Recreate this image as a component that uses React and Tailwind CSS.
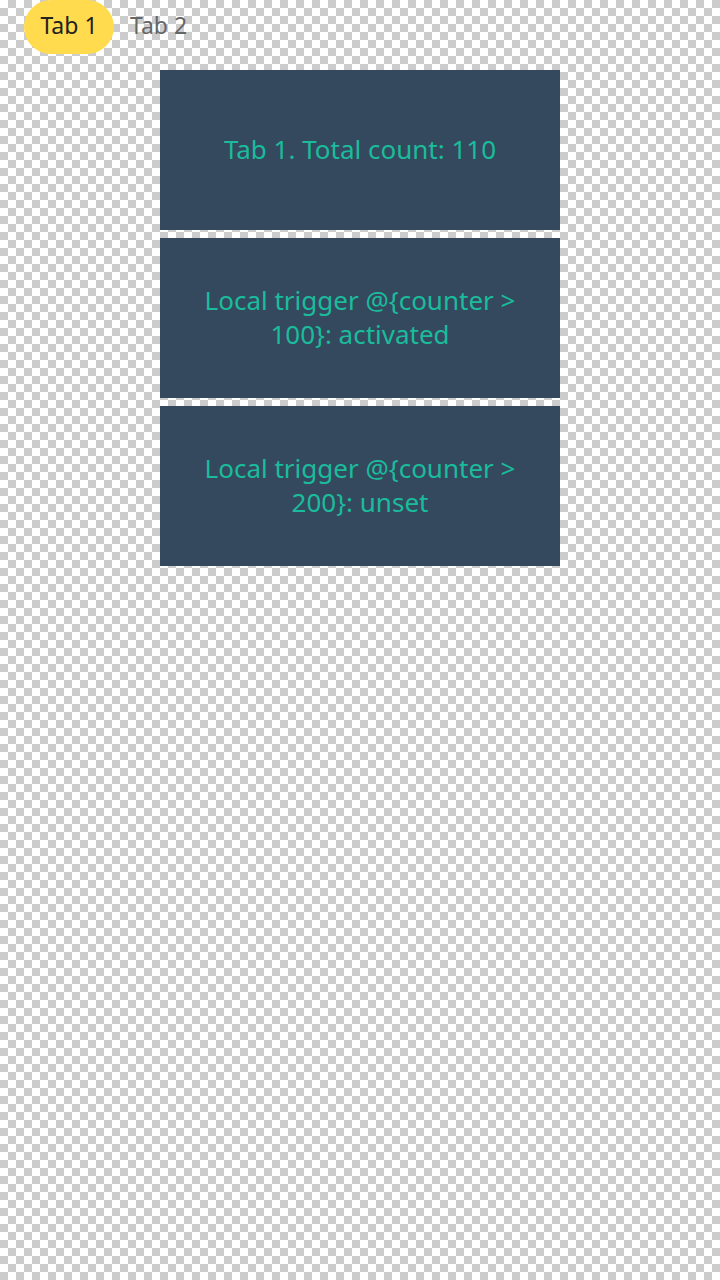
import React, { useState } from "react";

const App = () => {
  const [tab, setTab] = useState(1);
  const counter = 110;

  const blocks = [
    `Tab ${tab}. Total count: ${counter}`,
    `Local trigger @{counter > 100}: ${counter > 100 ? "activated" : "unset"}`,
    `Local trigger @{counter > 200}: ${counter > 200 ? "activated" : "unset"}`,
  ];

  return (
    <div
      className="min-h-[1280px] w-full bg-[conic-gradient(#cccccc_25%,#ffffff_0_50%,#cccccc_0_75%,#ffffff_0)] bg-[length:16px_16px] font-['Noto_Sans','Open_Sans',sans-serif]"
    >
      {/* Tabs */}
      <div className="flex items-center gap-4 pl-6 h-[54px]">
        {[1, 2].map((t) => (
          <button
            key={t}
            onClick={() => setTab(t)}
            className={`h-[54px] pb-1 rounded-full text-[23px] leading-none ${
              tab === t
                ? "bg-[#ffdb4d] text-[#222222] w-[90px]"
                : "text-[#666666] px-0"
            }`}
          >
            Tab {t}
          </button>
        ))}
      </div>

      {/* Blocks */}
      <div className="flex flex-col items-center gap-2 mt-4">
        {blocks.map((text, i) => (
          <div
            key={i}
            className="w-[400px] h-[160px] pb-0.5 bg-[#34495e] text-[#1abc9c] flex items-center justify-center text-center px-8 text-[26px] leading-[34px]"
          >
            {text}
          </div>
        ))}
      </div>
    </div>
  );
};

export default App;
